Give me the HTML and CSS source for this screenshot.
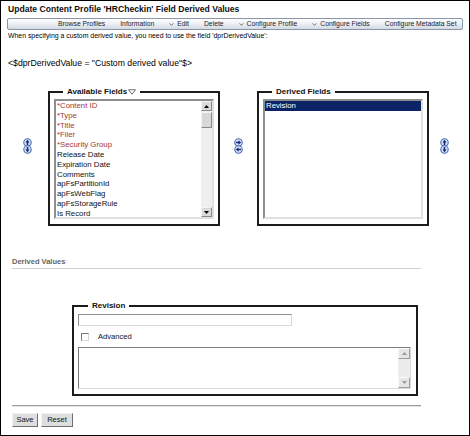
FILE: index.html
```html
<!DOCTYPE html>
<html>
<head>
<meta charset="utf-8">
<title>Update Content Profile</title>
<link rel="stylesheet" href="styles.css">
</head>
<body>
<div class="frame">
  <h1 class="title">Update Content Profile 'HRCheckin' Field Derived Values</h1>
  <nav class="menubar">
    <span class="mi">Browse Profiles</span>
    <span class="mi">Information</span>
    <span class="mi"><svg class="chev" viewBox="0 0 6 4"><polyline points="0.5,0.5 3,3 5.5,0.5"/></svg>Edit</span>
    <span class="mi">Delete</span>
    <span class="mi"><svg class="chev" viewBox="0 0 6 4"><polyline points="0.5,0.5 3,3 5.5,0.5"/></svg>Configure Profile</span>
    <span class="mi"><svg class="chev" viewBox="0 0 6 4"><polyline points="0.5,0.5 3,3 5.5,0.5"/></svg>Configure Fields</span>
    <span class="mi">Configure Metadata Set</span>
  </nav>
  <p class="intro">When specifying a custom derived value, you need to use the field 'dprDerivedValue':</p>
  <p class="intro code">&lt;$dprDerivedValue = "Custom derived value"$&gt;</p>

  <div class="fields-row">
    <div class="movers movers-left">
      <svg class="mv" viewBox="0 0 16 16"><circle cx="8" cy="8" r="6.6"/><path d="M8 3.3 L11.8 8 H9.4 V12.4 H6.6 V8 H4.2 Z"/></svg>
      <svg class="mv" viewBox="0 0 16 16"><circle cx="8" cy="8" r="6.6"/><path d="M8 12.7 L11.8 8 H9.4 V3.6 H6.6 V8 H4.2 Z"/></svg>
    </div>
    <fieldset class="fieldbox">
      <legend>Available Fields<svg class="tri" viewBox="0 0 10 7"><polygon points="0.7,0.7 9.3,0.7 5,6.3"/></svg></legend>
      <div class="listbox">
        <ul class="options">
          <li class="req">*Content ID</li>
          <li class="req">*Type</li>
          <li class="req">*Title</li>
          <li class="req">*Filer</li>
          <li class="req">*Security Group</li>
          <li>Release Date</li>
          <li>Expiration Date</li>
          <li>Comments</li>
          <li>apFsPartitionId</li>
          <li>apFsWebFlag</li>
          <li>apFsStorageRule</li>
          <li>Is Record</li>
        </ul>
        <div class="vscroll">
          <div class="sbtn"><svg viewBox="0 0 7 4"><polygon points="0,4 3.5,0 7,4"/></svg></div>
          <div class="thumb"></div>
          <div class="track"></div>
          <div class="sbtn"><svg viewBox="0 0 7 4"><polygon points="0,0 3.5,4 7,0"/></svg></div>
        </div>
      </div>
    </fieldset>
    <div class="movers movers-mid">
      <svg class="mv" viewBox="0 0 16 16"><circle cx="8" cy="8" r="6.6"/><path d="M12.7 8 L8 4.2 V6.6 H3.6 V9.4 H8 V11.8 Z"/></svg>
      <svg class="mv" viewBox="0 0 16 16"><circle cx="8" cy="8" r="6.6"/><path d="M3.3 8 L8 4.2 V6.6 H12.4 V9.4 H8 V11.8 Z"/></svg>
    </div>
    <fieldset class="fieldbox">
      <legend>Derived Fields</legend>
      <div class="listbox">
        <ul class="options">
          <li class="selected">Revision</li>
        </ul>
      </div>
    </fieldset>
    <div class="movers movers-right">
      <svg class="mv" viewBox="0 0 16 16"><circle cx="8" cy="8" r="6.6"/><path d="M8 3.3 L11.8 8 H9.4 V12.4 H6.6 V8 H4.2 Z"/></svg>
      <svg class="mv" viewBox="0 0 16 16"><circle cx="8" cy="8" r="6.6"/><path d="M8 12.7 L11.8 8 H9.4 V3.6 H6.6 V8 H4.2 Z"/></svg>
    </div>
  </div>

  <h2 class="section-head">Derived Values</h2>

  <fieldset class="valuebox">
    <legend>Revision</legend>
    <input class="textfield" type="text">
    <div class="checkrow">
      <input class="check" type="checkbox" id="adv">
      <label for="adv">Advanced</label>
    </div>
    <div class="textarea">
      <div class="ta-body"></div>
      <div class="vscroll light">
        <div class="sbtn"><svg viewBox="0 0 7 4"><polygon points="0,4 3.5,0 7,4"/></svg></div>
        <div class="track"></div>
        <div class="sbtn"><svg viewBox="0 0 7 4"><polygon points="0,0 3.5,4 7,0"/></svg></div>
      </div>
    </div>
  </fieldset>

  <hr class="sep">
  <div class="actions">
    <button class="btn btn-save" type="button">Save</button>
    <button class="btn btn-reset" type="button">Reset</button>
  </div>
</div>
</body>
</html>
```
FILE: styles.css
```css
body {
  margin: 0;
  background: #fff;
}

.frame {
  width: 470px;
  height: 436px;
  box-sizing: border-box;
  border: 1px solid #000;
  background: #fff;
  color: #000;
  font-family: "Liberation Sans", Arial, sans-serif;
  overflow: hidden;
}

.title {
  margin: 2px 0 0 7px;
  font-size: 8.6px;
  line-height: 12px;
  font-weight: bold;
  color: #111;
}

.menubar {
  margin: 3px 6px 0 6px;
  height: 12px;
  box-sizing: border-box;
  border: 1px solid #8b96a8;
  border-radius: 2px;
  background: linear-gradient(#fcfdff 0%, #eef1f6 45%, #d3d9e3 100%);
  display: flex;
  align-items: center;
  padding-left: 50px;
  gap: 15px;
  font-size: 6.8px;
  line-height: 10px;
  color: #1b1b2e;
  white-space: nowrap;
}

.mi {
  display: flex;
  align-items: center;
}

.chev {
  width: 5px;
  height: 3px;
  margin-right: 3px;
  fill: none;
  stroke: #333;
  stroke-width: 0.9;
}

.intro {
  margin: 1px 0 0 7px;
  font-size: 6.9px;
  line-height: 9px;
}

.code {
  margin-top: 18px;
  font-size: 8.7px;
  line-height: 11px;
}

.fields-row {
  margin-top: 18px;
  display: flex;
  align-items: flex-start;
}

.movers {
  flex: none;
  width: 9px;
  margin-top: 51px;
  display: flex;
  flex-direction: column;
}

.movers-left { margin-left: 22px; }
.movers-mid { margin-left: 14px; }
.movers-right { margin-left: 11px; }

.mv {
  flex: none;
  width: 9px;
  height: 9px;
  display: block;
  margin-bottom: -2px;
}

.mv circle {
  fill: #dbe5f7;
  stroke: #4a6cb5;
  stroke-width: 2;
}

.mv path {
  fill: #142c78;
}

.fieldbox {
  flex: none;
  margin: 0 0 0 16px;
  width: 172px;
  box-sizing: border-box;
  padding: 2px 4px 5px 4px;
  border: 2px solid #1c1c1c;
  min-width: 0;
}

.movers-mid + .fieldbox {
  margin-left: 14px;
}

.fieldbox legend,
.valuebox legend {
  margin-left: 9px;
  padding: 0 4px;
  font-size: 8px;
  line-height: 10px;
  font-weight: bold;
  color: #111;
  display: flex;
  align-items: center;
}

.tri {
  width: 8px;
  height: 6px;
  margin-left: 1px;
  fill: #fff;
  stroke: #333;
  stroke-width: 0.9;
}

.listbox {
  height: 120px;
  box-sizing: border-box;
  border: 2px solid;
  border-color: #8e8e8e #e0e0e0 #e0e0e0 #8e8e8e;
  display: flex;
  background: #fff;
}

.options {
  flex: 1;
  margin: 0;
  padding: 0;
  list-style: none;
  font-size: 7.8px;
  line-height: 9.8px;
  color: #111;
}

.options li {
  padding-left: 1px;
  white-space: nowrap;
}

.options .req {
  color: #a23838;
}

.options .selected {
  background: #0c2466;
  color: #fff;
  line-height: 10px;
}

.vscroll {
  width: 11px;
  display: flex;
  flex-direction: column;
  background: #efefef;
}

.sbtn {
  height: 10px;
  box-sizing: border-box;
  background: #dadada;
  border: 1px solid;
  border-color: #f4f4f4 #8a8a8a #8a8a8a #f4f4f4;
  display: flex;
  align-items: center;
  justify-content: center;
}

.sbtn svg {
  width: 5px;
  height: 3px;
  fill: #000;
}

.thumb {
  height: 16px;
  margin-top: 1px;
  box-sizing: border-box;
  background: #d8d8d8;
  border: 1px solid;
  border-color: #f4f4f4 #8a8a8a #8a8a8a #f4f4f4;
}

.track {
  flex: 1;
}

.section-head {
  margin: 31px 48px 0 11px;
  padding-bottom: 1px;
  border-bottom: 1px solid #cfcfcf;
  font-size: 7.5px;
  line-height: 10px;
  font-weight: bold;
  color: #666;
}

.valuebox {
  margin: 32px 0 0 71px;
  width: 346px;
  box-sizing: border-box;
  padding: 3px 4px 5px 4px;
  border: 2px solid #1c1c1c;
  min-width: 0;
}

.valuebox legend {
  margin-left: 10px;
}

.textfield {
  display: block;
  margin: 0;
  width: 214px;
  height: 12px;
  box-sizing: border-box;
  border: 1px solid;
  border-color: #8e8e8e #d8d8d8 #d8d8d8 #8e8e8e;
  padding: 0;
  background: #fff;
}

.checkrow {
  margin-top: 7px;
  height: 8px;
  display: flex;
  align-items: center;
  font-size: 7.6px;
  line-height: 8px;
  color: #111;
}

.check {
  appearance: none;
  -webkit-appearance: none;
  margin: 0 0 0 3px;
  width: 8px;
  height: 8px;
  box-sizing: border-box;
  border: 1px solid;
  border-color: #7a7a7a #d6d6d6 #d6d6d6 #7a7a7a;
  background: #fff;
}

.checkrow label {
  margin-left: 9px;
}

.textarea {
  margin-top: 6px;
  width: 333px;
  height: 42px;
  box-sizing: border-box;
  border: 1px solid;
  border-color: #7e7e7e #dcdcdc #dcdcdc #7e7e7e;
  display: flex;
  background: #fff;
}

.ta-body {
  flex: 1;
}

.vscroll.light {
  width: 12px;
  background: #ececec;
}

.vscroll.light .sbtn {
  height: 11px;
  background: #e6e6e6;
  border-color: #fafafa #9c9c9c #9c9c9c #fafafa;
}

.vscroll.light .sbtn svg {
  fill: #9a9a9a;
}

.sep {
  margin: 9px 48px 0 11px;
  height: 0;
  border: 0;
  border-top: 1px solid #9e9e9e;
  border-bottom: 1px solid #e2e2e2;
}

.actions {
  margin: 6px 0 0 11px;
  display: flex;
  gap: 3px;
}

.btn {
  height: 14px;
  box-sizing: border-box;
  padding: 0;
  margin: 0;
  border: 1px solid;
  border-color: #f2f2f2 #6e6e6e #6e6e6e #f2f2f2;
  background: #dedede;
  font-family: "Liberation Sans", Arial, sans-serif;
  font-size: 7.5px;
  line-height: 12px;
  color: #111;
}

.btn-save { width: 26px; }
.btn-reset { width: 32px; }
```
